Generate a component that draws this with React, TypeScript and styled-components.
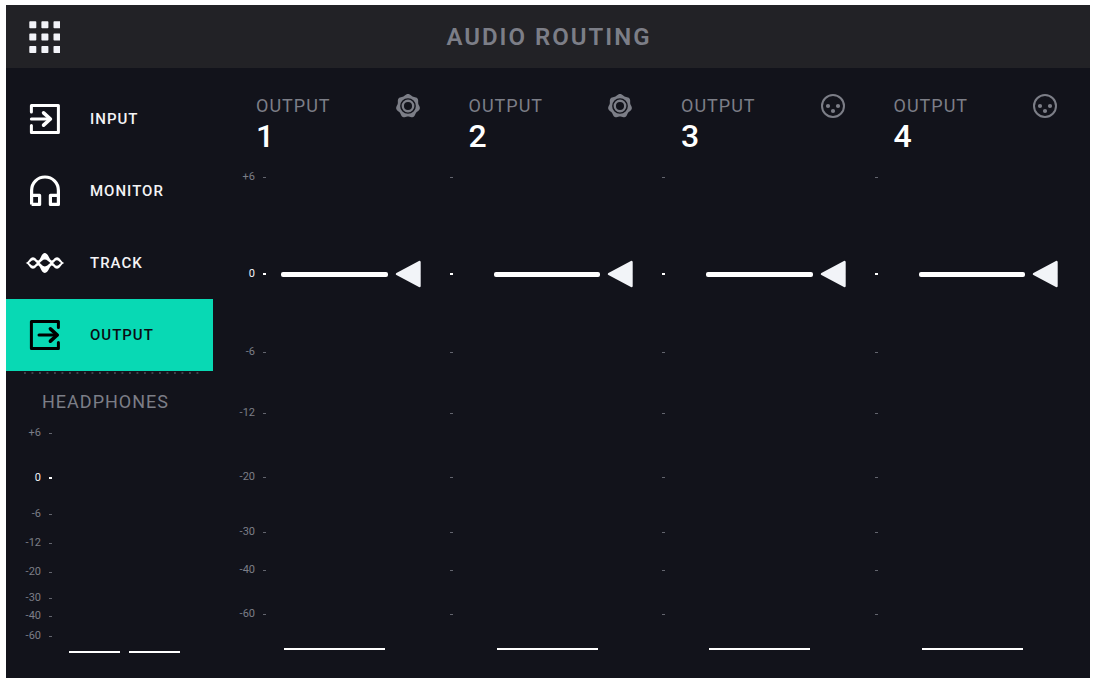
import React, { useState } from 'react';
import styled, { createGlobalStyle } from 'styled-components';

const GlobalStyle = createGlobalStyle`
  *, *::before, *::after { box-sizing: border-box; }
  body {
    margin: 0;
    background: #fff;
    font-family: Roboto, "Liberation Sans", sans-serif;
  }
  button { font: inherit; border: 0; background: none; cursor: pointer; }
`;

const Page = styled.div`
  display: flex;
  min-height: 100vh;
  padding: 5px 8px 4px 6px;
`;

const Screen = styled.div`
  flex: 1;
  min-width: 0;
  display: flex;
  flex-direction: column;
  background: #12131b;
`;

const Header = styled.header`
  display: grid;
  grid-template-columns: 76px 1fr 74px;
  align-items: center;
  height: 63px;
  background: #222226;
`;

const MenuButton = styled.button`
  justify-self: start;
  display: flex;
  margin-left: 22px;
  padding: 0;
  color: #f2f3f8;
`;

const Title = styled.h1`
  margin: 0;
  text-align: center;
  font-size: 24px;
  line-height: 32px;
  font-weight: 600;
  letter-spacing: 2px;
  color: #7c7e87;
`;

const Body = styled.div`
  flex: 1;
  display: flex;
`;

const Sidebar = styled.aside`
  flex: none;
  width: 207px;
  display: flex;
  flex-direction: column;
  padding: 15px 0 25px;
`;

const NavItem = styled.button<{ $active: boolean }>`
  display: grid;
  grid-template-columns: 40px 1fr;
  column-gap: 25px;
  align-items: center;
  justify-items: start;
  width: 100%;
  height: 72px;
  padding: 0 0 0 19px;
  font-size: 15px;
  font-weight: 500;
  letter-spacing: 1px;
  color: ${(p) => (p.$active ? '#0b0c12' : '#f4f4f6')};
  background: ${(p) => (p.$active ? '#08d9b4' : 'transparent')};

  svg {
    justify-self: center;
    color: ${(p) => (p.$active ? '#000' : '#fff')};
  }
`;

const Divider = styled.hr`
  width: 180px;
  height: 2px;
  margin: 1px 0 0 18px;
  border: 0;
  background: linear-gradient(to right, #3e4049 2px, transparent 2px) 0 0 / calc(100% / 24) 2px;
`;

const SidebarHeading = styled.h2`
  margin: 16px 0 13px;
  padding-right: 8px;
  text-align: center;
  font-size: 18px;
  line-height: 24px;
  font-weight: 400;
  letter-spacing: 1px;
  color: #7c7e87;
`;

const Scale = styled.div<{ $rows: string }>`
  flex: 1;
  display: grid;
  grid-template-rows: ${(p) => p.$rows};
`;

const Mark = styled.div<{ $bright: boolean; $labelWidth: number }>`
  display: grid;
  grid-template-columns: ${(p) => p.$labelWidth}px 4px;
  column-gap: ${(p) => (p.$labelWidth > 2 ? 8 : 0)}px;
  align-items: center;
  height: 12px;
  font-size: 11px;
  line-height: 12px;
  text-align: right;
  white-space: nowrap;
  color: ${(p) => (p.$bright ? '#f4f4f6' : '#7c7e87')};

  &::after {
    content: '';
    grid-column: 2;
    width: 3px;
    height: ${(p) => (p.$bright ? 2 : 1)}px;
    background: ${(p) => (p.$bright ? '#fff' : '#63656e')};
  }
`;

const Meters = styled.div`
  display: flex;
  gap: 9px;
  padding-left: 63px;
`;

const Meter = styled.div<{ $width: number }>`
  width: ${(p) => p.$width}px;
  height: 2px;
  background: #fff;
`;

const Channels = styled.main`
  flex: 1;
  min-width: 0;
  display: grid;
  grid-template-columns: repeat(4, minmax(190px, 1fr));
  padding: 26px 5px 28px 22px;
`;

const Channel = styled.section`
  display: flex;
  flex-direction: column;
`;

const ChannelHead = styled.div`
  display: flex;
  justify-content: space-between;
  align-items: flex-start;
  margin-bottom: 17px;
  padding: 0 27px 0 21px;
  color: #7c7e87;
`;

const ChannelName = styled.h2`
  margin: 0;
  font-size: 18px;
  line-height: 24px;
  font-weight: 400;
  letter-spacing: 1px;
`;

const ChannelNumber = styled.span`
  display: block;
  font-size: 32px;
  line-height: 36px;
  font-weight: 500;
  letter-spacing: 0;
  color: #fff;
`;

const FaderArea = styled.div`
  flex: 1;
  display: grid;
  grid-template-columns: 46px 1fr;
  min-height: 240px;
`;

const FaderTrack = styled.div`
  position: relative;
  margin-right: 27px;
`;

const FaderInput = styled.input`
  position: absolute;
  inset: 0;
  width: 100%;
  height: 100%;
  margin: 0;
  opacity: 0;
  cursor: pointer;
  writing-mode: vertical-lr;
  direction: rtl;
`;

const Handle = styled.div`
  position: absolute;
  left: 0;
  right: 0;
  display: flex;
  align-items: center;
  gap: 7px;
  transform: translateY(-50%);
`;

const HandleBar = styled.span`
  flex: 1;
  height: 5px;
  border-radius: 2px;
  background: #fff;
`;

const ChannelMeter = styled.div`
  padding-left: 49px;
`;

const LABELS = ['+6', '0', '-6', '-12', '-20', '-30', '-40', '-60'];
const OUTPUT_ROWS = '97fr 78fr 61fr 64fr 55fr 38fr 44fr 40fr';
const HEADPHONE_ROWS = '45fr 36fr 29fr 29fr 26fr 18fr 20fr 21fr';

// Fader travel in percent from the top, for each labelled level.
const STOPS: [number, number][] = [
  [6, 1.3], [0, 21.6], [-6, 37.9], [-12, 50.7], [-20, 64.2], [-30, 75.7], [-40, 83.6], [-60, 92.9],
];

function travel(db: number) {
  for (let i = 1; i < STOPS.length; i++) {
    const [hi, top] = STOPS[i - 1];
    const [lo, bottom] = STOPS[i];
    if (db >= lo) return top + ((hi - db) / (hi - lo)) * (bottom - top);
  }
  return STOPS[STOPS.length - 1][1];
}

function Marks({ rows, labelWidth, labelled = true }: { rows: string; labelWidth: number; labelled?: boolean }) {
  return (
    <Scale $rows={rows}>
      {LABELS.map((label) => (
        <Mark key={label} $bright={label === '0'} $labelWidth={labelWidth}>
          {labelled && <span>{label}</span>}
        </Mark>
      ))}
    </Scale>
  );
}

const GridIcon = () => (
  <svg width="32" height="34" viewBox="0 0 32 34" fill="currentColor" aria-hidden="true">
    {[0.3, 12.6, 25].map((y) =>
      [1.3, 13.4, 25.5].map((x) => <rect key={`${x}-${y}`} x={x} y={y + 1} width="7" height="7" rx="0.8" />)
    )}
  </svg>
);

const InputIcon = () => (
  <svg width="32" height="32" viewBox="0 0 32 32" fill="none" stroke="currentColor" strokeWidth="3" strokeLinejoin="round" strokeLinecap="round" aria-hidden="true">
    <path d="M2.4 9V2.4H29.4V29.6H2.4V22.600" />
    <path d="M2.400 16H21" />
    <path d="M14.6 9.8L21.4 16L14.6 22.2" strokeWidth="3.6" />
  </svg>
);

const OutputIcon = () => (
  <svg width="32" height="32" viewBox="0 0 32 32" fill="none" stroke="currentColor" strokeWidth="3" strokeLinejoin="round" strokeLinecap="round" aria-hidden="true">
    <path d="M29.4 8.500V2.4H2.4V29.6H29.4V23.500" />
    <path d="M10 16H28" />
    <path d="M21.4 9.8L28.2 16L21.4 22.2" strokeWidth="3.6" />
  </svg>
);

const HeadphonesIcon = () => (
  <svg width="32" height="32" viewBox="0 0 32 32" fill="none" stroke="currentColor" strokeWidth="3.2" strokeLinejoin="round" aria-hidden="true">
    <path d="M2.6 29.4V15.5C2.6 7.6 8.6 2 16 2S29.4 7.6 29.4 15.5V29.4H21.4V20.4H29.4M2.6 29.4H10.6V20.4H2.6" />
  </svg>
);

const TrackIcon = () => (
  <svg width="40" height="22" viewBox="0 0 40 22" fill="currentColor" fillRule="evenodd" aria-hidden="true">
    <path d="M0.600 11C4 10 4.800 5.2 8 5.2C10.600 5.200 11.600 8.400 13.200 8.400C15.400 8.400 16.400 1 19.800 1S24.600 8.400 26.800 8.400C28.400 8.400 29.400 5.200 32 5.200C35.200 5.200 36 10 39.400 11C36 12 35.200 16.800 32 16.800C29.400 16.800 28.400 13.600 26.800 13.600C24.600 13.600 23.600 21 19.800 21S15.400 13.600 13.200 13.600C11.600 13.600 10.600 16.800 8 16.800C4.800 16.800 4 12 0.600 11ZM3.800 11C5.600 12 6.400 13.800 8.200 13.800C9.800 13.800 10.400 12 12 11C10.400 10 9.800 8.200 8.200 8.200C6.400 8.200 5.600 10 3.800 11ZM14.600 11C16.600 12.400 17.600 14.400 19.800 14.400S23.400 12.400 25.400 11C23.400 9.600 22 7.600 19.800 7.600S16.600 9.600 14.600 11ZM28 11C29.600 12 30.200 13.800 31.800 13.800C33.600 13.800 34.400 12 36.200 11C34.400 10 33.600 8.200 31.800 8.200C30.200 8.200 29.600 10 28 11Z" />
  </svg>
);

// Outline of the seven-lobed nut around the jack socket.
const NUT_OUTLINE = Array.from({ length: 84 }, (_, i) => {
  const a = (i / 84) * Math.PI * 2;
  const r = 11.5 + 0.8 * Math.cos(7 * a);
  return `${i ? 'L' : 'M'}${(r * Math.sin(a)).toFixed(2)} ${(-r * Math.cos(a)).toFixed(2)}`;
}).join('');

const JackIcon = () => (
  <svg width="26" height="24" viewBox="-13 -12.200 26 24.400" fill="currentColor" role="img" aria-label="Jack">
    <path fillRule="evenodd" d={`${NUT_OUTLINE}ZM-8 0A8 8 0 1 0 8 0A8 8 0 1 0 -8 0Z`} />
    <circle r="5.300" fill="none" stroke="currentColor" strokeWidth="2.400" />
  </svg>
);

const XlrIcon = () => (
  <svg width="26" height="24" viewBox="-13 -12 26 24" fill="currentColor" role="img" aria-label="XLR">
    <circle r="11" fill="none" stroke="currentColor" strokeWidth="2" />
    <circle cx="-5" cy="0" r="2.100" />
    <circle cx="5" cy="0" r="2.100" />
    <circle cx="0" cy="5" r="2.100" />
  </svg>
);

const Pointer = () => (
  <svg width="26" height="28" viewBox="0 0 26 28" aria-hidden="true">
    <path d="M2 14L24.500 2V26Z" fill="#f2f4f8" stroke="#f2f4f8" strokeWidth="2.400" strokeLinejoin="round" />
  </svg>
);

const NAV = [
  { label: 'INPUT', Icon: InputIcon },
  { label: 'MONITOR', Icon: HeadphonesIcon },
  { label: 'TRACK', Icon: TrackIcon },
  { label: 'OUTPUT', Icon: OutputIcon },
];

const OUTPUTS = [
  { number: 1, Icon: JackIcon },
  { number: 2, Icon: JackIcon },
  { number: 3, Icon: XlrIcon },
  { number: 4, Icon: XlrIcon },
];

function OutputChannel({ number, Icon }: { number: number; Icon: () => React.JSX.Element }) {
  const [level, setLevel] = useState(0);
  const first = number === 1;
  return (
    <Channel>
      <ChannelHead>
        <ChannelName>
          OUTPUT <ChannelNumber>{number}</ChannelNumber>
        </ChannelName>
        <Icon />
      </ChannelHead>
      <FaderArea>
        <Marks rows={OUTPUT_ROWS} labelWidth={first ? 20 : 2} labelled={first} />
        <FaderTrack>
          <Handle style={{ top: `${travel(level)}%` }}>
            <HandleBar />
            <Pointer />
          </Handle>
          <FaderInput
            type="range"
            min={-60}
            max={6}
            value={level}
            aria-label={`Output ${number} level`}
            onChange={(e) => setLevel(Number(e.target.value))}
          />
        </FaderTrack>
      </FaderArea>
      <ChannelMeter>
        <Meter $width={101} />
      </ChannelMeter>
    </Channel>
  );
}

export default function App() {
  const [active, setActive] = useState('OUTPUT');
  return (
    <Page>
      <GlobalStyle />
      <Screen>
        <Header>
          <MenuButton type="button" aria-label="Menu">
            <GridIcon />
          </MenuButton>
          <Title>AUDIO ROUTING</Title>
        </Header>
        <Body>
          <Sidebar>
            <nav>
              {NAV.map(({ label, Icon }) => (
                <NavItem
                  key={label}
                  type="button"
                  $active={active === label}
                  aria-current={active === label ? 'page' : undefined}
                  onClick={() => setActive(label)}
                >
                  <Icon />
                  {label}
                </NavItem>
              ))}
            </nav>
            <Divider />
            <SidebarHeading>HEADPHONES</SidebarHeading>
            <Marks rows={HEADPHONE_ROWS} labelWidth={35} />
            <Meters>
              <Meter $width={51} />
              <Meter $width={51} />
            </Meters>
          </Sidebar>
          <Channels>
            {OUTPUTS.map((output) => (
              <OutputChannel key={output.number} {...output} />
            ))}
          </Channels>
        </Body>
      </Screen>
    </Page>
  );
}
